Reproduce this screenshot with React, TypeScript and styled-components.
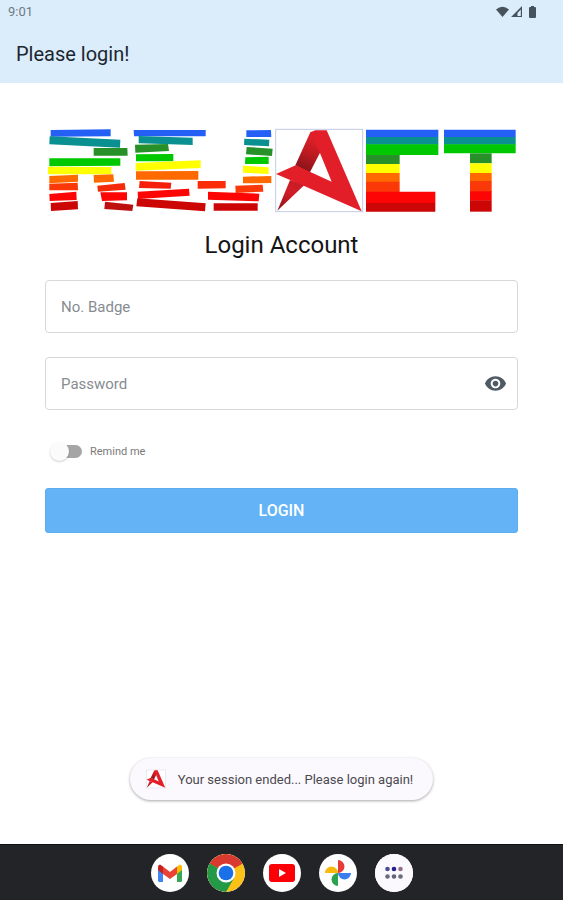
import React, { useState } from "react";
import styled, { createGlobalStyle } from "styled-components";

const GlobalStyle = createGlobalStyle`
  * { box-sizing: border-box; }
  body {
    margin: 0;
    background: #fff;
    font-family: Roboto, "Liberation Sans", sans-serif;
  }
`;

const Screen = styled.div`
  min-height: 100vh;
  display: flex;
  flex-direction: column;
`;

const Header = styled.header`
  background: #dbedfb;
`;

const StatusBar = styled.div`
  display: flex;
  align-items: center;
  justify-content: space-between;
  height: 23px;
  padding: 0 24px 0 8px;
  color: #6f7b84;
  font-size: 13px;
`;

const StatusIcons = styled.svg`
  display: block;
  width: 44px;
  height: 14px;
`;

const PageTitle = styled.h1`
  margin: 0;
  padding: 19px 16px 17px;
  color: #1b2630;
  font-size: 20px;
  line-height: 24px;
  font-weight: 400;
`;

const Form = styled.form`
  display: flex;
  flex-direction: column;
  padding: 42px 45px 0;
`;

const LogoImage = styled.svg`
  display: block;
  width: 100%;
`;

const FormTitle = styled.h2`
  margin: 16px 0 21px;
  color: #151515;
  font-size: 24px;
  line-height: 28px;
  font-weight: 400;
  text-align: center;
`;

const Field = styled.div`
  display: flex;
  align-items: center;
  height: 53px;
  margin-bottom: 24px;
  border: 1px solid #d5d7d9;
  border-radius: 4px;
  background: #fff;
`;

const FieldInput = styled.input`
  flex: 1;
  min-width: 0;
  height: 100%;
  padding: 0 15px;
  border: 0;
  outline: 0;
  background: transparent;
  color: #333;
  font: inherit;
  font-size: 15px;
  &::placeholder {
    color: #878c91;
    opacity: 1;
  }
`;

const IconButton = styled.button`
  display: flex;
  margin-right: 10px;
  padding: 0;
  border: 0;
  background: none;
  color: #505a64;
  cursor: pointer;
`;

const Remind = styled.label`
  display: flex;
  align-items: center;
  align-self: flex-start;
  gap: 8px;
  height: 24px;
  margin: 5px 0 25px 4px;
  color: #7a7a7a;
  font-size: 11px;
`;

const Switch = styled.input`
  appearance: none;
  display: flex;
  align-items: center;
  width: 28px;
  height: 13px;
  margin: 0 0 0 5px;
  background: #a5a5a5;
  border-radius: 7px;
  cursor: pointer;
  &::before {
    content: "";
    flex: none;
    width: 19px;
    height: 19px;
    margin: 0 -4px;
    border-radius: 50%;
    background: #fbfbfb;
    box-shadow: 0 1px 2px rgba(0, 0, 0, 0.2);
  }
  &:checked {
    justify-content: flex-end;
  }
  &:checked::before {
    background: #63b3f6;
  }
`;

const LoginButton = styled.button`
  height: 45px;
  border: 1px solid #5cacf1;
  border-radius: 3px;
  background: #63b3f6;
  color: #fff;
  font: inherit;
  font-size: 16px;
  font-weight: 500;
  cursor: pointer;
`;

const Toast = styled.div`
  display: flex;
  align-items: center;
  align-self: center;
  gap: 12px;
  min-height: 42px;
  margin: auto 16px 44px;
  padding: 0 20px 0 16px;
  border-radius: 21px;
  background: #fbf9fe;
  box-shadow: 0 1px 3px rgba(0, 0, 0, 0.35);
  color: #4b4a50;
  font-size: 13px;
`;

const Dock = styled.nav`
  display: flex;
  justify-content: center;
  align-items: center;
  gap: 18px;
  height: 56px;
  border-top: 1px solid #111214;
  background: #232427;
`;

const DockButton = styled.button`
  display: flex;
  padding: 0;
  border: 0;
  border-radius: 50%;
  background: #fff;
  overflow: hidden;
  cursor: pointer;
`;

const BLUE = "#2460f5";
const TEAL = "#0a9090";
const FOREST = "#289028";
const GREEN = "#00c800";
const YELLOW = "#ffff00";
const ORANGE = "#ff6a00";
const VERMILION = "#fb3808";
const RED = "#fd0505";
const CRIMSON = "#cc0505";

type Bar = [color: string, points: string];

const rBars: Bar[] = [
  [BLUE, "32,30 212,28 212,49 32,50"],
  [TEAL, "29,49 241,59 240,83 28,73"],
  [FOREST, "161,84 262,84 263,107 161,107"],
  [GREEN, "28,115 241,115 241,137 28,139"],
  [YELLOW, "24,140 214,141 214,163 24,163"],
  [ORANGE, "28,168 114,164 114,185 28,190"],
  [ORANGE, "161,165 220,163 222,185 162,188"],
  [VERMILION, "28,191 113,188 114,211 28,211"],
  [RED, "28,222 109,215 110,240 29,243"],
  [CRIMSON, "32,249 113,243 114,268 33,273"],
  ["#f32b0a", "172,197 254,189 257,209 174,215"],
  [RED, "181,217 261,217 261,241 186,243"],
  ["#bf1010", "195,245 280,254 277,273 193,267"],
];

const eBars: Bar[] = [
  [BLUE, "11,30 227,30 227,49 12,49"],
  [TEAL, "26,48 188,53 188,75 26,70"],
  [FOREST, "15,74 114,72 117,93 16,98"],
  [GREEN, "18,103 130,102 130,124 18,124"],
  [YELLOW, "17,129 212,121 212,144 17,152"],
  [ORANGE, "18,154 205,153 205,179 18,179"],
  ["#f51e0a", "29,183 124,188 122,206 27,204"],
  [RED, "23,215 177,206 179,227 24,237"],
  [CRIMSON, "22,235 227,250 225,274 19,259"],
];

const jBars: Bar[] = [
  [BLUE, "349,31 423,30 424,51 349,51"],
  [TEAL, "343,56 418,59 417,79 342,75"],
  [FOREST, "350,81 428,86 426,108 348,103"],
  [GREEN, "346,112 416,110 416,132 345,132"],
  [YELLOW, "339,137 416,142 416,162 339,158"],
  [ORANGE, "339,170 424,168 424,189 339,190"],
  [VERMILION, "316,197 398,194 400,215 317,219"],
  ["#fa2d08", "203,183 287,183 287,205 203,206"],
  [RED, "234,215 388,221 386,244 234,239"],
  [CRIMSON, "251,250 383,250 383,272 251,272"],
];

const cBars: Bar[] = [
  [BLUE, "18,29 235,29 235,52 18,52"],
  [TEAL, "18,51 235,51 235,74 18,74"],
  [GREEN, "18,73 235,73 235,105 18,105"],
  [FOREST, "18,105 119,105 119,132 18,132"],
  [YELLOW, "18,132 119,132 119,159 18,159"],
  [ORANGE, "18,159 119,159 119,186 18,186"],
  [VERMILION, "18,185 119,185 119,216 18,216"],
  [RED, "18,215 226,215 226,250 18,250"],
  [CRIMSON, "18,249 226,249 226,275 18,275"],
];

const tBars: Bar[] = [
  [BLUE, "252,29 467,29 467,52 252,52"],
  [TEAL, "252,51 467,51 467,74 252,74"],
  [GREEN, "252,73 467,73 467,100 252,100"],
  [FOREST, "330,100 395,100 395,130 330,130"],
  [YELLOW, "330,130 395,130 395,159 330,159"],
  [ORANGE, "330,159 395,159 395,184 330,184"],
  [VERMILION, "330,183 395,183 395,216 330,216"],
  [RED, "330,214 395,214 395,242 330,242"],
  [CRIMSON, "330,241 395,241 395,275 330,275"],
];

function Bars({ bars }: { bars: Bar[] }) {
  return (
    <>
      {bars.map(([color, points]) => (
        <polygon key={points} points={points} fill={color} />
      ))}
    </>
  );
}

function Emblem({ shade }: { shade: string }) {
  return (
    <>
      <defs>
        <linearGradient id={shade} gradientUnits="userSpaceOnUse" x1="135" y1="60" x2="95" y2="150">
          <stop offset="0" stopColor="#dc1f28" />
          <stop offset="0.5" stopColor="#b81a21" />
          <stop offset="1" stopColor="#86131a" />
        </linearGradient>
        <linearGradient id={`${shade}-leg`} gradientUnits="userSpaceOnUse" x1="80" y1="185" x2="25" y2="270">
          <stop offset="0" stopColor="#c91c25" />
          <stop offset="0.4" stopColor="#cf1d26" />
          <stop offset="1" stopColor="#8d1218" />
        </linearGradient>
      </defs>
      <path d="M60 180 L104 194 L22 272Z" fill={`url(#${shade}-leg)`} />
      <path d="M121 37 L150 42 L150 98 L119 158 L76 136Z" fill={`url(#${shade})`} />
      <path
        d="M121 37 L136 31 L170 31 L275 274 L101 197 L18 162 L77 136 L121 156 L185 185 L149 97 L139 76Z"
        fill="#e21f29"
      />
    </>
  );
}

function Logo() {
  return (
    <LogoImage viewBox="15 15 1419 270" role="img" aria-label="REJACT">
      <Bars bars={rBars} />
      <g transform="translate(270)">
        <Bars bars={eBars} />
        <Bars bars={jBars} />
      </g>
      <g transform="translate(690)">
        <rect x="17" y="28" width="261" height="247" fill="#fff" stroke="#c3cbe6" strokeWidth="3" />
        <Emblem shade="logo-shade" />
      </g>
      <g transform="translate(960)">
        <Bars bars={cBars} />
        <Bars bars={tBars} />
      </g>
    </LogoImage>
  );
}

function EyeIcon() {
  return (
    <svg width="23" height="23" viewBox="0 0 24 24" fill="currentColor" aria-hidden="true">
      <path d="M12 4.5C7 4.5 2.73 7.61 1 12c1.73 4.39 6 7.5 11 7.5s9.27-3.11 11-7.5c-1.73-4.39-6-7.5-11-7.5zM12 17c-2.76 0-5-2.24-5-5s2.24-5 5-5 5 2.24 5 5-2.24 5-5 5zm0-8c-1.66 0-3 1.34-3 3s1.34 3 3 3 3-1.34 3-3-1.34-3-3-3z" />
    </svg>
  );
}

const apps = [
  {
    name: "Gmail",
    art: (
      <>
        <path d="M7 14v12.500q0 1.500 1.500 1.500H12V17z" fill="#4285f4" />
        <path d="M26 17v11h3.500q1.500 0 1.500-1.500V14z" fill="#34a853" />
        <path d="M26 12.500 29 10.500q2 0 2 2.500V16l-5 4z" fill="#fbbc04" />
        <path d="M12 12.500 9 10.500q-2 0-2 2.500V16l5 4z" fill="#c5221f" />
        <path d="M12 12.500 19 18l7-5.500V20l-7 5-7-5z" fill="#ea4335" />
      </>
    ),
  },
  {
    name: "Chrome",
    art: (
      <>
        <circle cx="19" cy="19" r="19" fill="#fbc116" />
        <path d="M19 19 2.550 9.500A19 19 0 0 1 35.450 9.500Z" fill="#d93a2f" />
        <path d="M19 9.500H35.450L27 14Z" fill="#d93a2f" />
        <path d="M2.550 9.500A19 19 0 0 0 19 38L27.200 23.700 19 19Z" fill="#249a48" />
        <path d="M2.550 9.500 10.800 23.700 19 19Z" fill="#249a48" />
        <circle cx="19" cy="19" r="9.500" fill="#fff" />
        <circle cx="19" cy="19" r="7.300" fill="#1a70e8" />
      </>
    ),
  },
  {
    name: "YouTube",
    art: (
      <>
        <rect x="6" y="10" width="26" height="18" rx="3" fill="#fb0007" />
        <path d="M16 15v8l7-4z" fill="#fff" />
      </>
    ),
  },
  {
    name: "Photos",
    art: (
      <>
        <path d="M19 6a6.500 6.500 0 0 1 0 13z" fill="#e53d33" />
        <path d="M32 19a6.500 6.500 0 0 1-13 0z" fill="#3b7ded" />
        <path d="M19 32a6.500 6.500 0 0 1 0-13z" fill="#2ba24c" />
        <path d="M6 19a6.500 6.500 0 0 1 13 0z" fill="#f9b90b" />
      </>
    ),
  },
  {
    name: "All apps",
    art: (
      <>
        <rect width="38" height="38" fill="#fbf8fe" />
        <circle cx="12.500" cy="15" r="2.300" fill="#4d4d96" />
        <circle cx="19" cy="15" r="2.300" fill="#27218c" />
        <circle cx="25.500" cy="15" r="2.300" fill="#91708d" />
        <circle cx="12.500" cy="22.500" r="2.300" fill="#6b6b7b" />
        <circle cx="19" cy="22.500" r="2.300" fill="#62627b" />
        <circle cx="25.500" cy="22.500" r="2.300" fill="#6b6b7b" />
      </>
    ),
  },
];

export default function App() {
  const [shown, setShown] = useState(false);
  return (
    <Screen>
      <GlobalStyle />
      <Header>
        <StatusBar>
          <span>9:01</span>
          <StatusIcons viewBox="0 0 44 14" fill="#46535c" aria-hidden="true">
            <path d="M1 4.500Q7.500-1 14 4.500L7.500 12Z" />
            <path d="M27 1V12H16ZM25.800 4.500 22.500 8V11h3.300Z" fillRule="evenodd" />
            <rect x="34" y="2" width="7" height="11" rx="1" />
            <rect x="36" y="1" width="3" height="2" />
          </StatusIcons>
        </StatusBar>
        <PageTitle>Please login!</PageTitle>
      </Header>
      <Form onSubmit={(e) => e.preventDefault()}>
        <Logo />
        <FormTitle>Login Account</FormTitle>
        <Field>
          <FieldInput aria-label="No. Badge" placeholder="No. Badge" />
        </Field>
        <Field>
          <FieldInput aria-label="Password" placeholder="Password" type={shown ? "text" : "password"} />
          <IconButton type="button" aria-label="Show password" onClick={() => setShown(!shown)}>
            <EyeIcon />
          </IconButton>
        </Field>
        <Remind>
          <Switch type="checkbox" role="switch" />
          Remind me
        </Remind>
        <LoginButton type="submit">LOGIN</LoginButton>
      </Form>
      <Toast role="status">
        <svg width="20" height="20" viewBox="10 22 275 260" aria-hidden="true">
          <rect x="17" y="28" width="261" height="247" fill="#fff" stroke="#dcdcec" strokeWidth="8" />
          <Emblem shade="toast-shade" />
        </svg>
        <span>Your session ended... Please login again!</span>
      </Toast>
      <Dock aria-label="Apps">
        {apps.map(({ name, art }) => (
          <DockButton key={name} type="button" aria-label={name}>
            <svg width="38" height="38" viewBox="0 0 38 38" aria-hidden="true">
              {art}
            </svg>
          </DockButton>
        ))}
      </Dock>
    </Screen>
  );
}
